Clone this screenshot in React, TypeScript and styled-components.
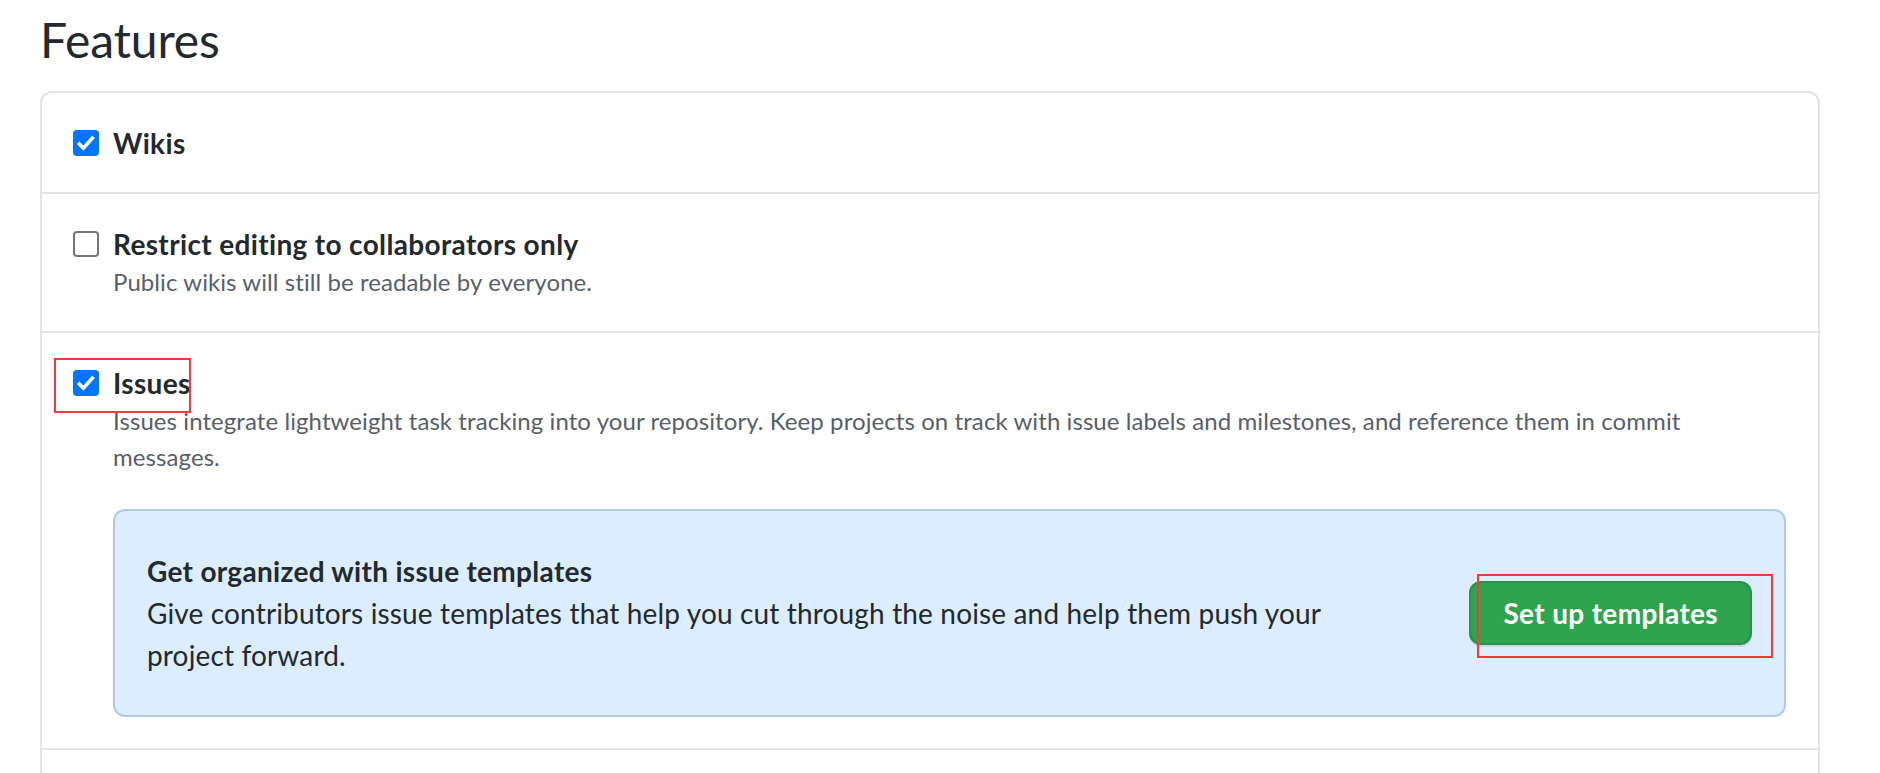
import React from "react";
import styled, { createGlobalStyle } from "styled-components";

const GlobalStyle = createGlobalStyle`
  html, body { margin: 0; padding: 0; background: #ffffff; }
  body {
    font-family: Lato, "Noto Sans", "Liberation Sans", sans-serif;
    color: #24292e;
  }
  * { box-sizing: border-box; }
`;

const Page = styled.main`
  width: 1880px;
  height: 773px;
  overflow: hidden;
  padding: 10px 60px 0 40px;
`;

const Heading = styled.h2`
  margin: 0 0 21px;
  font-size: 48px;
  font-weight: 400;
  line-height: 60px;
  letter-spacing: -0.1px;
  color: #24292e;
`;

const Box = styled.section`
  border: 2px solid #e1e4e8;
  border-radius: 12px;
  background: #fff;
`;

const Row = styled.div<{ $minHeight?: number }>`
  position: relative;
  display: grid;
  grid-template-columns: 26px 1fr;
  column-gap: 14px;
  padding: 32px 32px 31px 31px;
  min-height: ${(p) => (p.$minHeight ? `${p.$minHeight}px` : "auto")};
  & + & {
    border-top: 2px solid #e1e4e8;
  }
`;

const CheckBox = styled.span<{ $checked: boolean }>`
  grid-column: 1;
  grid-row: 1;
  width: 26px;
  height: 26px;
  margin-top: 5px;
  border-radius: 4px;
  display: flex;
  align-items: center;
  justify-content: center;
  background: ${(p) => (p.$checked ? "#0075ff" : "#ffffff")};
  border: ${(p) => (p.$checked ? "none" : "2px solid #767676")};
`;

const Label = styled.label`
  grid-column: 2;
  grid-row: 1;
  font-size: 28px;
  font-weight: 700;
  line-height: 36px;
  letter-spacing: 0.35px;
  color: #24292e;
`;

const Note = styled.p`
  grid-column: 2;
  margin: 2px 0 0;
  font-size: 24px;
  line-height: 36px;
  letter-spacing: 0.08px;
  color: #586069;
`;

const Flash = styled.div`
  grid-column: 2;
  margin-top: 34px;
  display: flex;
  align-items: center;
  justify-content: space-between;
  padding: 39px 32px;
  background: #dbedff;
  border: 2px solid rgba(4, 66, 137, 0.2);
  border-radius: 12px;
`;

const FlashText = styled.div`
  max-width: 1200px;
  font-size: 28px;
  line-height: 42px;
  letter-spacing: 0.15px;
  color: #24292e;
`;

const FlashTitle = styled.strong`
  display: block;
  font-weight: 700;
  letter-spacing: 0.3px;
`;

const ButtonSlot = styled.div`
  position: relative;
  flex-shrink: 0;
`;

const GreenButton = styled.button`
  display: block;
  height: 64px;
  padding: 0 32px;
  font-family: inherit;
  font-size: 28px;
  font-weight: 700;
  line-height: 40px;
  letter-spacing: 0.35px;
  color: #ffffff;
  background: #2ea44f;
  border: 2px solid rgba(27, 31, 35, 0.15);
  border-radius: 12px;
  box-shadow: 0 2px 0 rgba(27, 31, 35, 0.1);
  cursor: pointer;
`;

const Annotation = styled.span<{ $top: number; $left: number; $w: number; $h: number }>`
  position: absolute;
  top: ${(p) => p.$top}px;
  left: ${(p) => p.$left}px;
  width: ${(p) => p.$w}px;
  height: ${(p) => p.$h}px;
  border: 2px solid #f43a3a;
  pointer-events: none;
`;

const Check = () => (
  <svg width="26" height="26" viewBox="0 0 26 26" aria-hidden="true">
    <path
      d="M5.2 12.8 L10.4 18.2 L20.6 6.8"
      fill="none"
      stroke="#ffffff"
      strokeWidth="3.6"
      strokeLinejoin="miter"
    />
  </svg>
);

export default function App() {
  return (
    <>
      <GlobalStyle />
      <Page>
        <Heading>Features</Heading>
        <Box>
          <Row>
            <CheckBox $checked>
              <Check />
            </CheckBox>
            <Label>Wikis</Label>
          </Row>
          <Row>
            <CheckBox $checked={false} />
            <Label>Restrict editing to collaborators only</Label>
            <Note>Public wikis will still be readable by everyone.</Note>
          </Row>
          <Row>
            <CheckBox $checked>
              <Check />
            </CheckBox>
            <Label>Issues</Label>
            <Annotation $top={25} $left={12} $w={137} $h={55} />
            <Note>
              Issues integrate lightweight task tracking into your repository. Keep projects on track with issue
              labels and milestones, and reference them in commit messages.
            </Note>
            <Flash>
              <FlashText>
                <FlashTitle>Get organized with issue templates</FlashTitle>
                Give contributors issue templates that help you cut through the noise and help them push your
                project forward.
              </FlashText>
              <ButtonSlot>
                <GreenButton type="button">Set up templates</GreenButton>
                <Annotation $top={-7} $left={8} $w={296} $h={84} />
              </ButtonSlot>
            </Flash>
          </Row>
          <Row $minHeight={60} aria-hidden="true" />
        </Box>
      </Page>
    </>
  );
}
